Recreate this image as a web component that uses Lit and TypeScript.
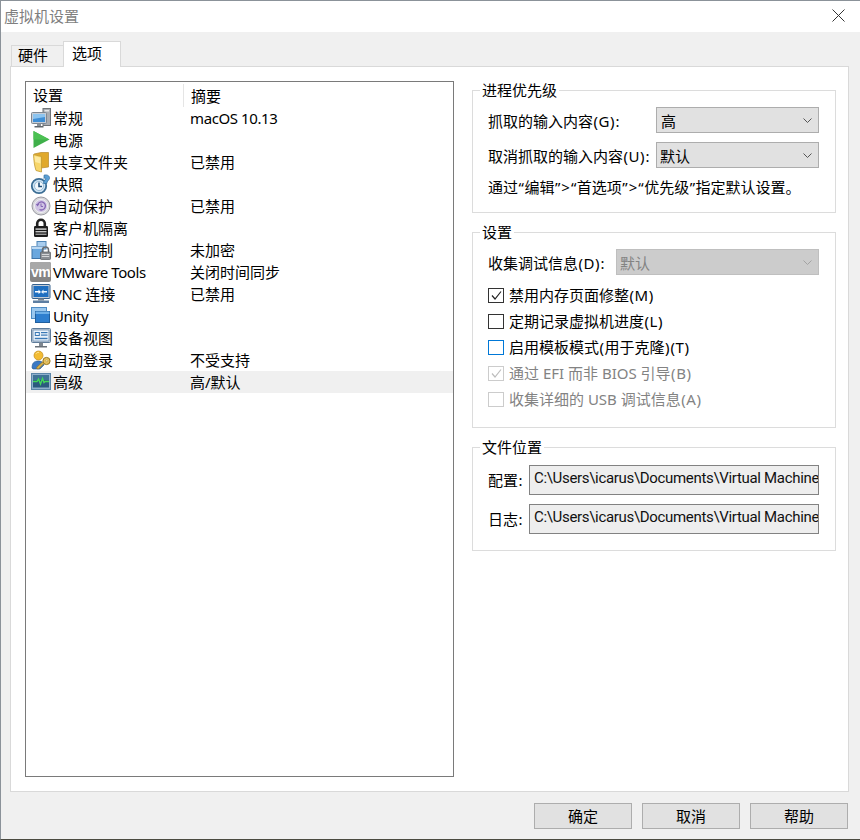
import { LitElement, html, css, svg } from "lit";
import { customElement } from "lit/decorators.js";

const wrap = (c: unknown) => html`<svg class="ic" width="20" height="20" viewBox="0 0 20 20">${c}</svg>`;

const icons: Record<string, unknown> = {
  general: wrap(svg`
    <rect x="12" y="0.5" width="7.5" height="17" fill="#a9adb3" stroke="#6f7478"/>
    <rect x="13.5" y="2" width="4.5" height="1.5" fill="#e4e6e8"/>
    <rect x="0.5" y="4.5" width="15" height="11" rx="1" fill="#c6cdd6" stroke="#7d8791"/>
    <rect x="2" y="6" width="12" height="8" fill="#3f8fd6"/>
    <path d="M2 6h12v3L2 11z" fill="#8cc4ef"/>
    <rect x="6" y="15.5" width="4" height="2.5" fill="#8a9097"/>
    <rect x="3.5" y="18" width="9" height="1.5" fill="#5f666c"/>`),
  power: wrap(svg`<path d="M2.5 1L18.5 9.5L2.5 18z" fill="#3fb04a"/><path d="M2.5 1L18.5 9.5L2.5 9.5z" fill="#4cc153"/>`),
  folder: wrap(svg`
    <path d="M3 2L10 0.5H17.5V15L10 16Z" fill="#e0a92c" stroke="#b98a2a" stroke-width=".7"/>
    <path d="M2.5 2.5L10.5 4.5V20L5 18.5C3.4 14 2.8 8 2.5 2.5Z" fill="#f7d66a" stroke="#c19a35" stroke-width=".8"/>
    <path d="M3.5 4L9.5 5.6V11.5L4.2 10Z" fill="#fdeaa0"/>`),
  snapshot: wrap(svg`
    <circle cx="8" cy="12" r="7.2" fill="#cfe4f4" stroke="#3b6d94" stroke-width="1.8"/>
    <circle cx="8" cy="12" r="4.5" fill="#f3f8fc" stroke="#86aecb" stroke-width=".8"/>
    <path d="M8 8.5V12.5H11" fill="none" stroke="#21507a" stroke-width="1.6"/>
    <path d="M13 1.2C16 0.2 19 1.8 18.5 4.5C18 6.5 15.8 7 15.8 9.5H12.5C12.5 6.5 15 5.5 14.8 4C14.2 3.5 13.5 3.8 13 4.5Z" fill="#5a9fd4" stroke="#2f6a9b" stroke-width=".7"/>`),
  autoprotect: wrap(svg`
    <circle cx="10" cy="10" r="9" fill="#d6d6da" stroke="#9a9aa2"/>
    <circle cx="10" cy="10" r="6.5" fill="#cfc4e4" stroke="#f1f1f3"/>
    <path d="M6.5 9A4 4 0 1 1 8.5 13.5" fill="none" stroke="#8466b4" stroke-width="1.3"/>
    <path d="M4.8 8L8.3 8L6.5 10.6Z" fill="#8466b4"/>
    <path d="M10 7.5V10.5H12" fill="none" stroke="#8466b4" stroke-width="1"/>`),
  lock: wrap(svg`
    <path d="M6.2 9V5.5a3.8 3.8 0 0 1 7.6 0V9" fill="none" stroke="#222" stroke-width="2.6"/>
    <rect x="3" y="8" width="14" height="11" rx="1.2" fill="#1c1c1c"/>
    <rect x="4.5" y="10.4" width="11" height="1.4" fill="#d6d6d6"/>
    <rect x="4.5" y="13" width="11" height="1.4" fill="#c4c4c4"/>
    <rect x="4.5" y="15.6" width="11" height="1.4" fill="#9a9a9a"/>`),
  access: wrap(svg`
    <rect x="6" y="1.5" width="9" height="7.5" fill="#a9cdee" stroke="#4f86b8"/>
    <rect x="1" y="6.5" width="11" height="12" fill="#6aa7de" stroke="#3f74a8"/>
    <rect x="1" y="6.5" width="11" height="2.5" fill="#bcd9f3"/>
    <path d="M11.5 12V10a3 3 0 0 1 6 0v2" fill="none" stroke="#6a6e73" stroke-width="1.5"/>
    <rect x="9.5" y="12" width="10" height="7.5" rx=".8" fill="#8a8e93" stroke="#55595d" stroke-width=".7"/>
    <rect x="10.8" y="14" width="7.4" height="1" fill="#d5d7d9"/><rect x="10.8" y="16" width="7.4" height="1" fill="#d5d7d9"/>`),
  vmware: wrap(svg`
    <rect x="-1" y="0" width="21" height="20" rx="2" fill="#858585"/>
    <path d="M-1 2a2 2 0 0 1 2-2h17a2 2 0 0 1 2 2v6H-1z" fill="#a8a8a8"/>
    <text x="9.5" y="15" text-anchor="middle" font-family="Liberation Sans, sans-serif" font-weight="700" font-size="14" letter-spacing="-0.7" fill="#fff">vm</text>`),
  vnc: wrap(svg`
    <rect x="1" y="0.5" width="18" height="14" rx="1" fill="#c5cdd6" stroke="#33608e"/>
    <rect x="2.5" y="2" width="15" height="11" fill="#1f6fc0"/>
    <path d="M4 7h3.5V5.5L10 8 7.5 10V8.5H4z" fill="#fff"/>
    <path d="M16 7h-3.5V5.5L10 8l2.5 2V8.5H16z" fill="#e6f2fc"/>
    <rect x="7" y="14.5" width="6" height="2" fill="#7f8790"/>
    <rect x="2" y="16.5" width="16" height="2.5" fill="#5d7ea2"/>`),
  unity: wrap(svg`
    <rect x="0.5" y="1.5" width="15" height="11" fill="#9cc8ee" stroke="#4f8cc4"/>
    <rect x="4.5" y="5.5" width="14" height="11" fill="#2f7fcf" stroke="#215f9e"/>
    <rect x="4.5" y="5.5" width="14" height="2.5" fill="#6fb0e8"/>`),
  device: wrap(svg`
    <rect x="0.5" y="0.5" width="19" height="14" rx="1" fill="#c4ccd5" stroke="#5e7c9b"/>
    <rect x="2" y="2" width="16" height="11" fill="#eaf2fa" stroke="#6c90b3" stroke-width=".8"/>
    <rect x="3.8" y="4" width="5" height="4" fill="#3a78b5"/>
    <rect x="4.8" y="5" width="3" height="2" fill="#eaf2fa"/>
    <rect x="10" y="4" width="6.5" height="1.2" fill="#3a78b5"/><rect x="10" y="6.5" width="6.5" height="1.2" fill="#3a78b5"/>
    <rect x="3.8" y="9.8" width="12.7" height="1.4" fill="#3a78b5"/>
    <rect x="8" y="14.5" width="4" height="3.5" fill="#7f8790"/>
    <rect x="4" y="18" width="12" height="1.5" fill="#6a7178"/>`),
  autologin: wrap(svg`
    <path d="M1 18C1 13 3 11 7.5 11C11 11 13 13 13 15L9 19H2Z" fill="#3a79c4" stroke="#27598f" stroke-width=".6"/>
    <circle cx="7.5" cy="5.5" r="4.5" fill="#f3bc33" stroke="#bf8b1e" stroke-width=".7"/>
    <path d="M5 3.8a3 3 0 0 1 3-1.5" stroke="#fde59a" stroke-width="1" fill="none"/>
    <circle cx="15.5" cy="11" r="3.6" fill="#e6c05d" stroke="#96761f"/>
    <circle cx="15.8" cy="10.8" r="1" fill="#fff4c7" stroke="#96761f" stroke-width=".4"/>
    <path d="M13 13.5L7.5 19L5.5 18.5L6 17L11.5 12Z" fill="#dcb24a" stroke="#96761f" stroke-width=".7"/>`),
  advanced: wrap(svg`
    <rect x="0.5" y="1.5" width="19" height="16" fill="#8fb0cc" stroke="#5c86a9"/>
    <rect x="2" y="3" width="16" height="12.5" fill="#2b5a7e"/>
    <rect x="2" y="3" width="16" height="5" fill="#3f7396"/>
    <path d="M2 9.5H6L7.5 7L9.5 12L11.5 6.5L13 10.5L14.2 9.5H18" fill="none" stroke="#42d75a" stroke-width="1.4"/>`),
};

const rows: [string, string, string][] = [
  ["general", "常规", "macOS 10.13"],
  ["power", "电源", ""],
  ["folder", "共享文件夹", "已禁用"],
  ["snapshot", "快照", ""],
  ["autoprotect", "自动保护", "已禁用"],
  ["lock", "客户机隔离", ""],
  ["access", "访问控制", "未加密"],
  ["vmware", "VMware Tools", "关闭时间同步"],
  ["vnc", "VNC 连接", "已禁用"],
  ["unity", "Unity", ""],
  ["device", "设备视图", ""],
  ["autologin", "自动登录", "不受支持"],
  ["advanced", "高级", "高/默认"],
];

const chevron = html`<svg class="chev" width="9" height="5" viewBox="0 0 9 5"><path d="M0.5 0.5L4.5 4.5L8.5 0.5" fill="none" stroke="currentColor"/></svg>`;
const tick = html`<svg width="13" height="13" viewBox="0 0 13 13"><path d="M2 6.5L5 10L11 2.5" fill="none" stroke="currentColor" stroke-width="1.2"/></svg>`;

/* The reference's punctuation sits about a pixel wider than Noto Sans; Latin in list rows a touch narrower. */
const punct = (t: string) =>
  t.split(/([()“”>:])/).map((s, i) => (i % 2 ? html`<span class="p">${s}</span>` : s));
const latin = (t: string) =>
  t.split(/([A-Za-z0-9. ]+)/).map((s, i) => (i % 2 ? html`<span class="l">${s}</span>` : s));

@customElement("app-root")
export class AppRoot extends LitElement {
  static styles = css`
    :host { display: block; }
    * { box-sizing: border-box; }
    .win {
      width: 860px; height: 840px; display: flex; flex-direction: column;
      background: #f0f0f0; color: #000; border-top: 1px solid #8b9299; border-left: 1px solid #8b9299;
      border-bottom: 1px solid #4a4a40;
      font: 15px/20px "Noto Sans", "Noto Sans CJK SC", sans-serif;
    }
    .p { padding: 0 0.5px; }
    .l { letter-spacing: -0.4px; }
    .title {
      height: 31px; flex: none; background: #fff; display: flex; align-items: center; justify-content: space-between;
      padding: 0 15px 2px 3px; color: #7f7f7f;
    }
    .tabs { height: 35px; flex: none; display: flex; align-items: flex-end; padding-left: 10px; margin-bottom: -1px; }
    .tab { border: 1px solid #d9d9d9; border-bottom: 0; position: relative; }
    .tab.off { width: 52px; height: 22px; padding-left: 6px; line-height: 18px; border-right: 0; }
    .tab.on { width: 58px; height: 26px; background: #fff; padding-left: 8px; line-height: 23px; z-index: 1; }
    .panel {
      height: 726px; flex: none; margin: 0 11px 0 9px; background: #fff; border: 1px solid #d9d9d9;
      padding: 14px 12px 14px 14px; display: grid; grid-template-columns: 429px 364px; column-gap: 18px;
    }
    .list { border: 1px solid #7a7a7a; background: #fff; padding-top: 1px; }
    .row, .head { display: grid; grid-template-columns: 158px 1fr; height: 22px; align-items: center; }
    .head { height: 24px; }
    .head div:first-child { padding: 1px 0 0 7px; border-right: 1px solid #e5e5e5; height: 23px; }
    .head div:last-child { padding: 2px 0 0 7px; }
    .row { grid-template-columns: 164px 1fr; }
    .row.sel { background: #f0f0f0; }
    .name { display: flex; align-items: center; padding-left: 5px; gap: 2px; white-space: nowrap; }
    .ic { flex: none; display: block; overflow: visible; }
    .side { display: flex; flex-direction: column; gap: 10px; }
    fieldset { margin: 0; padding: 0; border: 1px solid #dcdcdc; min-width: 0; }
    legend { margin-left: -8px; padding: 0 2px; line-height: 18px; }
    .g1 { height: 132px; padding: 8px 16px 0 15px; }
    .g2 { height: 205px; padding: 8px 16px 0 15px; }
    .g3 { height: 113px; padding: 9px 16px 0 15px; }
    .line { display: flex; align-items: center; justify-content: space-between; height: 26px; margin-bottom: 9px; white-space: nowrap; }
    .line.flush { margin-bottom: 0; }
    .line > span { padding-top: 2px; }
    .note { white-space: nowrap; height: 20px; }
    .sel-box {
      height: 26px; background: #e1e1e1; border: 1px solid #adadad; display: flex; align-items: center;
      justify-content: space-between; padding: 2px 6px 0 3px; color: #000; flex: none;
    }
    .sel-box.w1 { width: 163px; }
    .sel-box.w1.pad { padding-left: 4px; }
    .sel-box.w2 { width: 203px; background: #cccccc; border-color: #bfbfbf; color: #838383; }
    .chev { color: #555; flex: none; margin-top: -2px; }
    .w2 .chev { color: #a3a3a3; }
    .check { display: flex; align-items: center; gap: 5px; height: 26px; white-space: nowrap; }
    .box { width: 16px; height: 15px; border: 1px solid #333; background: #fff; display: flex; align-items: center; justify-content: center; color: #222; flex: none; margin-top: 1px; }
    .check.focus .box { border-color: #0078d7; }
    .check.dis { color: #838383; }
    .check.dis .box { border-color: #cccccc; color: #bdbdbd; }
    .checks { margin-top: 7px; }
    .field { display: flex; align-items: center; justify-content: space-between; height: 30px; margin-bottom: 9px; white-space: nowrap; }
    .input {
      width: 290px; height: 30px; background: #eeeeee; border: 1px solid #828282; padding: 0 0 0 4px; line-height: 24px;
      overflow: hidden; color: #111; font-family: Roboto, sans-serif; letter-spacing: -0.32px;
    }
    .foot { flex: 1; display: flex; justify-content: flex-end; gap: 10px; padding: 11px 12px 0 0; }
    .btn { width: 98px; height: 26px; background: #e1e1e1; border: 1px solid #adadad; text-align: center; line-height: 24px; }
  `;

  render() {
    return html`<div class="win">
      <div class="title"><span>虚拟机设置</span>
        <svg width="13" height="13" viewBox="0 0 13 13"><path d="M0.5 0.5L12.5 12.5M12.5 0.5L0.5 12.5" stroke="#333" fill="none"/></svg>
      </div>
      <div class="tabs"><div class="tab off">硬件</div><div class="tab on">选项</div></div>
      <div class="panel">
        <div class="list">
          <div class="head"><div>设置</div><div>摘要</div></div>
          ${rows.map(([ic, a, b]) => html`<div class="row ${ic === "advanced" ? "sel" : ""}">
            <div class="name">${icons[ic]}<span>${latin(a)}</span></div><div>${latin(b)}</div></div>`)}
        </div>
        <div class="side">
          <fieldset class="g1"><legend>进程优先级</legend>
            <div class="line"><span>${punct("抓取的输入内容(G):")}</span><div class="sel-box w1 pad"><span>高</span>${chevron}</div></div>
            <div class="line"><span>${punct("取消抓取的输入内容(U):")}</span><div class="sel-box w1"><span>默认</span>${chevron}</div></div>
            <div class="note">${punct("通过“编辑”>“首选项”>“优先级”指定默认设置。")}</div>
          </fieldset>
          <fieldset class="g2"><legend>设置</legend>
            <div class="line flush"><span>${punct("收集调试信息(D):")}</span><div class="sel-box w2"><span>默认</span>${chevron}</div></div>
            <div class="checks">
              <div class="check"><div class="box">${tick}</div><span>${punct("禁用内存页面修整(M)")}</span></div>
              <div class="check"><div class="box"></div><span>${punct("定期记录虚拟机进度(L)")}</span></div>
              <div class="check focus"><div class="box"></div><span>${punct("启用模板模式(用于克隆)(T)")}</span></div>
              <div class="check dis"><div class="box">${tick}</div><span>${punct("通过 EFI 而非 BIOS 引导(B)")}</span></div>
              <div class="check dis"><div class="box"></div><span>${punct("收集详细的 USB 调试信息(A)")}</span></div>
            </div>
          </fieldset>
          <fieldset class="g3"><legend>文件位置</legend>
            <div class="field"><span>${punct("配置:")}</span><div class="input">C:\\Users\\icarus\\Documents\\Virtual Machine</div></div>
            <div class="field"><span>${punct("日志:")}</span><div class="input">C:\\Users\\icarus\\Documents\\Virtual Machine</div></div>
          </fieldset>
        </div>
      </div>
      <div class="foot"><div class="btn">确定</div><div class="btn">取消</div><div class="btn">帮助</div></div>
    </div>`;
  }
}
